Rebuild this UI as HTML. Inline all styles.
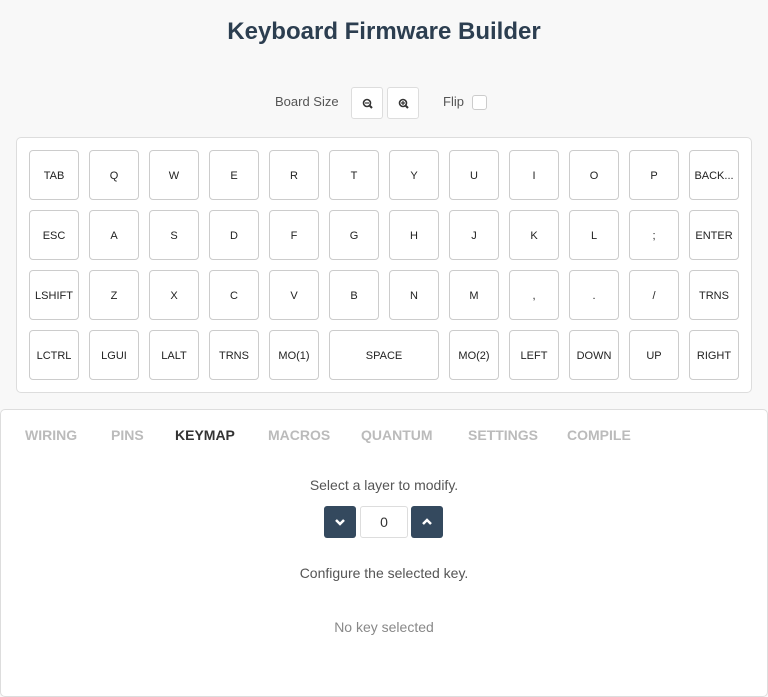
<!DOCTYPE html>
<html><head><meta charset="utf-8"><style>
*{box-sizing:border-box;margin:0;padding:0}
body{width:768px;height:697px;background:#f8f8f8;font-family:"Liberation Sans",sans-serif;position:relative;overflow:hidden;color:#333}
.a{position:absolute}
h1{position:absolute;top:18px;left:0;width:768px;text-align:center;font-size:24px;font-weight:bold;color:#2c3e50}
.lbl{font-size:13px;color:#555}
.sb{width:32px;height:32px;border:1px solid #ddd;border-radius:3px;background:#fff}
.kb{left:16px;top:137px;width:736px;height:256px;background:#fff;border:1px solid #ddd;border-radius:5px}
.k{position:absolute;width:50px;height:50px;border:1px solid #ccc;border-radius:4px;background:#fff;font-size:11px;color:#222;display:flex;align-items:center;justify-content:center;padding-top:1px}
.panel{left:0;top:409px;width:768px;height:288px;background:#fff;border:1px solid #ddd;border-radius:5px}
.tab{position:absolute;top:427px;font-size:14px;font-weight:bold;color:#bbb}
.c{position:absolute;left:0;width:768px;text-align:center;font-size:14px}
.db{width:32px;height:32px;background:#34495e;border-radius:3px;display:flex;align-items:center;justify-content:center}
</style></head><body>
<h1>Keyboard Firmware Builder</h1>
<div class="a lbl" style="left:275px;top:94px">Board Size</div>
<div class="a sb" style="left:351px;top:87px"><svg width="32" height="32"><circle cx="15" cy="15" r="3.5" fill="none" stroke="#333" stroke-width="1.6"/><line x1="17.5" y1="17.5" x2="20" y2="20" stroke="#333" stroke-width="2"/><line x1="13" y1="15" x2="17" y2="15" stroke="#333" stroke-width="1.2"/></svg></div>
<div class="a sb" style="left:387px;top:87px"><svg width="32" height="32"><circle cx="15" cy="15" r="3.5" fill="none" stroke="#333" stroke-width="1.6"/><line x1="17.5" y1="17.5" x2="20" y2="20" stroke="#333" stroke-width="2"/><line x1="13" y1="15" x2="17" y2="15" stroke="#333" stroke-width="1.2"/><line x1="15" y1="13" x2="15" y2="17" stroke="#333" stroke-width="1.2"/></svg></div>
<div class="a lbl" style="left:443px;top:94px">Flip</div>
<div class="a" style="left:472px;top:95px;width:15px;height:15px;border:1px solid #ccc;border-radius:3px;background:#fff"></div>
<div class="a kb"></div>
<div id="keys"></div>
<div class="a panel"></div>
<div class="tab" style="left:25px">WIRING</div>
<div class="tab" style="left:111px">PINS</div>
<div class="tab" style="left:175px;color:#333">KEYMAP</div>
<div class="tab" style="left:268px">MACROS</div>
<div class="tab" style="left:361px">QUANTUM</div>
<div class="tab" style="left:468px">SETTINGS</div>
<div class="tab" style="left:567px">COMPILE</div>
<div class="c" style="top:477px;color:#555">Select a layer to modify.</div>
<div class="a db" style="left:324px;top:506px"><svg width="12" height="10"><polyline points="2,3 6,7 10,3" fill="none" stroke="#fff" stroke-width="2.5"/></svg></div>
<div class="a" style="left:360px;top:506px;width:48px;height:32px;border:1px solid #ddd;border-radius:3px;background:#fff;text-align:center;line-height:30px;font-size:14px">0</div>
<div class="a db" style="left:411px;top:506px"><svg width="12" height="10"><polyline points="2,7 6,3 10,7" fill="none" stroke="#fff" stroke-width="2.5"/></svg></div>
<div class="c" style="top:565px;color:#555">Configure the selected key.</div>
<div class="c" style="top:619px;color:#888">No key selected</div>
<script>
var rows=[["TAB","Q","W","E","R","T","Y","U","I","O","P","BACK..."],["ESC","A","S","D","F","G","H","J","K","L",";","ENTER"],["LSHIFT","Z","X","C","V","B","N","M",",",".","/","TRNS"]];
var h="";
rows.forEach(function(r,i){r.forEach(function(t,j){h+='<div class="k" style="left:'+(29+60*j)+'px;top:'+(150+60*i)+'px">'+t+'</div>';});});
var last=[["LCTRL",0,50],["LGUI",1,50],["LALT",2,50],["TRNS",3,50],["MO(1)",4,50],["SPACE",5,110],["MO(2)",7,50],["LEFT",8,50],["DOWN",9,50],["UP",10,50],["RIGHT",11,50]];
last.forEach(function(k){h+='<div class="k" style="left:'+(29+60*k[1])+'px;top:330px;width:'+k[2]+'px">'+k[0]+'</div>';});
document.getElementById("keys").innerHTML=h;
</script>
</body></html>
